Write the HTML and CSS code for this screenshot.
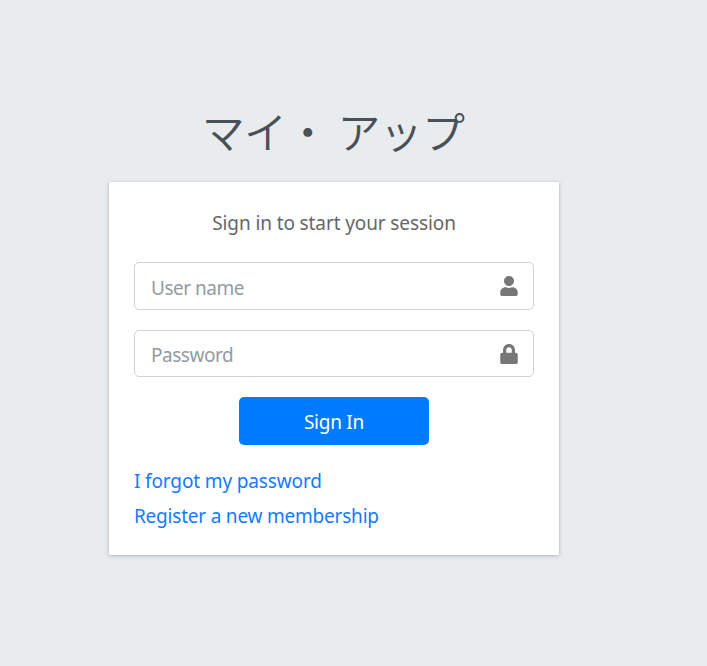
FILE: index.html
```html
<!DOCTYPE html>
<html lang="ja">
<head>
<meta charset="utf-8">
<title>マイ・ アップ</title>
<link rel="stylesheet" href="styles.css">
</head>
<body>
<main class="login-box">
  <h1 class="login-logo">マイ・ アップ</h1>
  <section class="card">
    <p class="login-msg"><span>Sign in to start your session</span></p>
    <form>
      <div class="field field-user">
        <span class="placeholder user-label">User name</span>
        <svg class="icon" viewBox="0 0 448 512"><path d="M224 256c70.7 0 128-57.300 128-128S294.700 0 224 0 96 57.300 96 128s57.300 128 128 128zm89.600 32h-16.700c-22.200 10.200-46.900 16-72.900 16s-50.600-5.800-72.900-16h-16.700C60.200 288 0 348.200 0 422.400V464c0 26.500 21.500 48 48 48h352c26.500 0 48-21.500 48-48v-41.600c0-74.200-60.200-134.400-134.400-134.400z"/></svg>
      </div>
      <div class="field field-pass">
        <span class="placeholder pass-label">Password</span>
        <svg class="icon" viewBox="0 0 448 512"><path d="M400 224h-24v-72C376 68.200 307.800 0 224 0S72 68.200 72 152v72H48c-26.500 0-48 21.500-48 48v192c0 26.500 21.500 48 48 48h352c26.500 0 48-21.500 48-48V272c0-26.500-21.500-48-48-48zm-104 0H152v-72c0-39.700 32.300-72 72-72s72 32.300 72 72v72z"/></svg>
      </div>
      <button class="submit" type="button"><span>Sign In</span></button>
    </form>
    <a class="link forgot" href="#">I forgot my password</a>
    <a class="link register" href="#">Register a new membership</a>
  </section>
</main>
</body>
</html>
```
FILE: styles.css
```css
* { box-sizing: border-box; }
body {
  margin: 0;
  min-height: 666px;
  background: #e9ecef;
  font-family: "Noto Sans", "Open Sans", "Noto Sans CJK JP", sans-serif;
  font-size: 19px;
  line-height: 30px;
  color: #666;
}
.login-box { width: 450px; margin-left: 109px; padding-top: 99px; }
.login-logo {
  margin: 0 0 20px;
  padding-right: 2px;
  height: 63px;
  font: 350 43px/63px "Noto Sans CJK JP", sans-serif;
  letter-spacing: -.7px;
  text-align: center;
  white-space: nowrap;
  color: #495057;
}
.card {
  height: 373px;
  padding: 25px;
  background: #fff;
  box-shadow: 0 0 1px rgba(0, 0, 0, .13), 0 1px 4px rgba(0, 0, 0, .22);
}
.login-msg { margin: 0 0 24px; padding-top: 1px; text-align: center; white-space: nowrap; letter-spacing: -.11px; }
.field {
  display: flex;
  align-items: center;
  justify-content: space-between;
  height: 48px;
  margin-bottom: 20px;
  padding: 3px 15px 0 16px;
  border: 1px solid #ced4da;
  border-radius: 5px;
}
.field-pass { height: 47px; }
.placeholder { color: #939ba2; white-space: nowrap; letter-spacing: -.48px; }
.icon { width: 18px; height: 20px; margin-bottom: 3px; fill: #777; }
.submit {
  display: block;
  width: 190px;
  height: 48px;
  margin: 0 auto 21px;
  padding: 2px 0 0;
  border: 0;
  border-radius: 5px;
  background: #007bff;
  color: #fff;
  font: inherit;
  letter-spacing: -.25px;
}
.link { display: block; width: max-content; margin-bottom: 5px; color: #147aff; text-decoration: none; white-space: nowrap; }
.forgot { letter-spacing: -.14px; }
.register { letter-spacing: -.21px; }
```
